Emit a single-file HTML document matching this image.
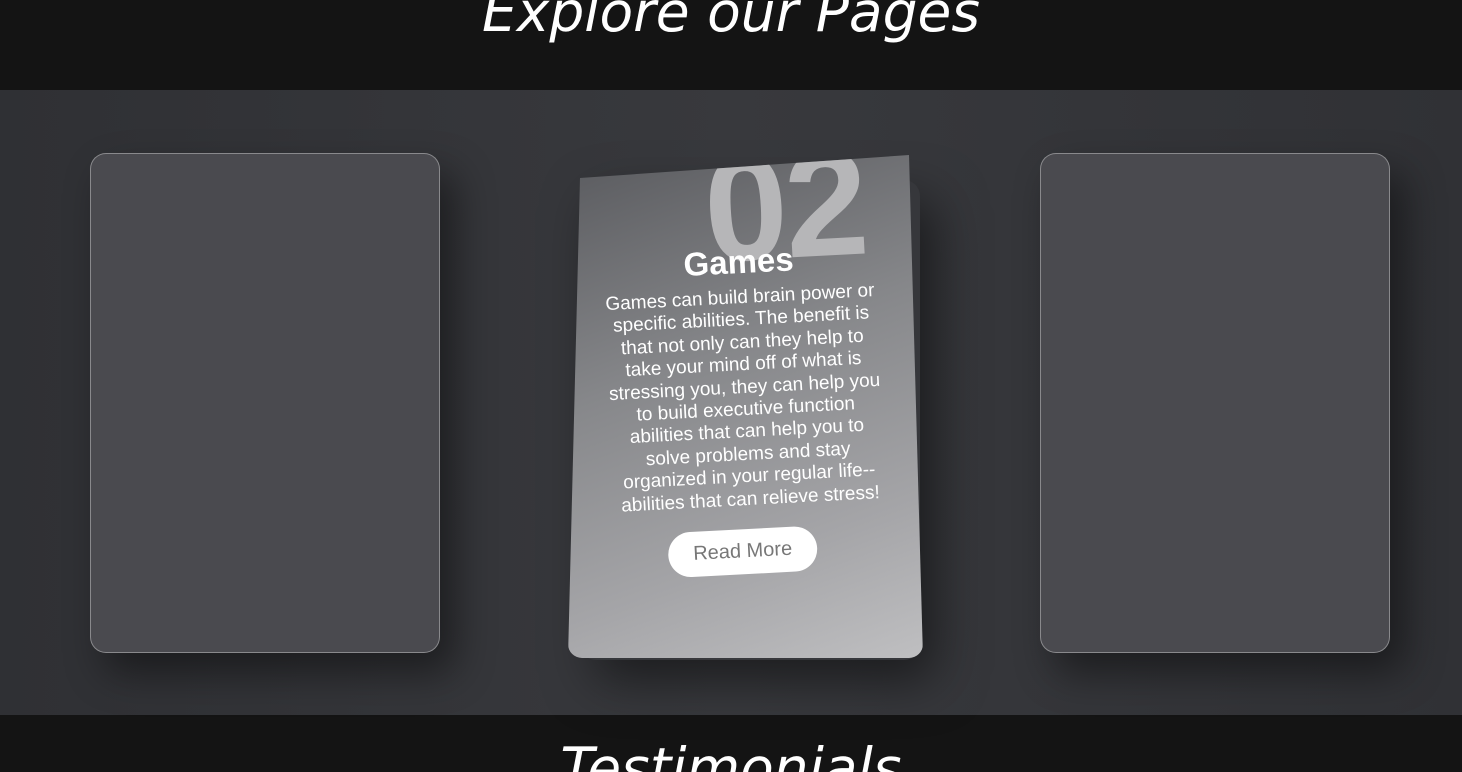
<!DOCTYPE html>
<html><head><meta charset="utf-8"><style>
*{margin:0;padding:0;box-sizing:border-box}
html{width:1462px;height:772px;overflow:hidden}
body{width:1462px;height:772px;overflow:hidden;background:#141414;font-family:"Liberation Sans",sans-serif;position:relative}
.h{position:absolute;left:0;width:1462px;text-align:center;color:#fff;font-family:"DejaVu Sans",sans-serif;font-style:italic;font-size:55px;line-height:64px}
.sec{position:absolute;left:0;top:90px;width:1462px;height:625px;background:linear-gradient(90deg,#2f3034,#38393d 50%,#303135)}
.side{position:absolute;top:153px;width:350px;height:500px;background:#4a4a4f;border:1px solid rgba(255,255,255,.35);border-radius:16px;box-shadow:15px 20px 40px rgba(0,0,0,.45)}
.shadow{position:absolute;left:580px;top:180px;width:340px;height:480px;box-shadow:15px 20px 50px rgba(0,0,0,.5);border-radius:16px}
.card{position:absolute;left:568px;top:155px;width:355px;height:503px;clip-path:polygon(12px 23px,341px 0,355px 503px,0 503px);background:linear-gradient(160deg,#595a5e 0%,#86878a 40%,#a5a5a8 75%,#bfbfc1 100%);border-radius:0 0 14px 14px;overflow:hidden}
.inner{position:absolute;left:-2px;top:0;width:355px;height:503px;transform:rotate(-3deg);transform-origin:50% 40%}
.num{position:absolute;left:146px;top:-22px;font-size:150px;font-weight:bold;color:#b6b6b8;letter-spacing:-3px;line-height:150px}
.t{position:absolute;left:0;width:355px;top:88px;text-align:center;color:#fff;font-weight:bold;font-size:33px}
.p{position:absolute;left:38px;width:278px;top:132px;text-align:center;color:#fff;font-size:19px;line-height:22.4px}
.btn{position:absolute;left:92px;top:374px;width:149px;height:45px;background:#fff;border-radius:23px;color:#777;font-size:20px;text-align:center;line-height:45px}
</style></head><body>
<div class="h" style="top:-20px">Explore our Pages</div>
<div class="sec"></div>
<div class="side" style="left:90px"></div>
<div class="side" style="left:1040px"></div>
<div class="shadow"></div>
<div class="card"><div class="inner">
<div class="num">02</div>
<div class="t">Games</div>
<div class="p">Games can build brain power or specific abilities. The benefit is that not only can they help to take your mind off of what is stressing you, they can help you to build executive function abilities that can help you to solve problems and stay organized in your regular life--abilities that can relieve stress!</div>
<div class="btn">Read More</div>
</div></div>
<div class="h" style="top:736px">Testimonials</div>
</body></html>
